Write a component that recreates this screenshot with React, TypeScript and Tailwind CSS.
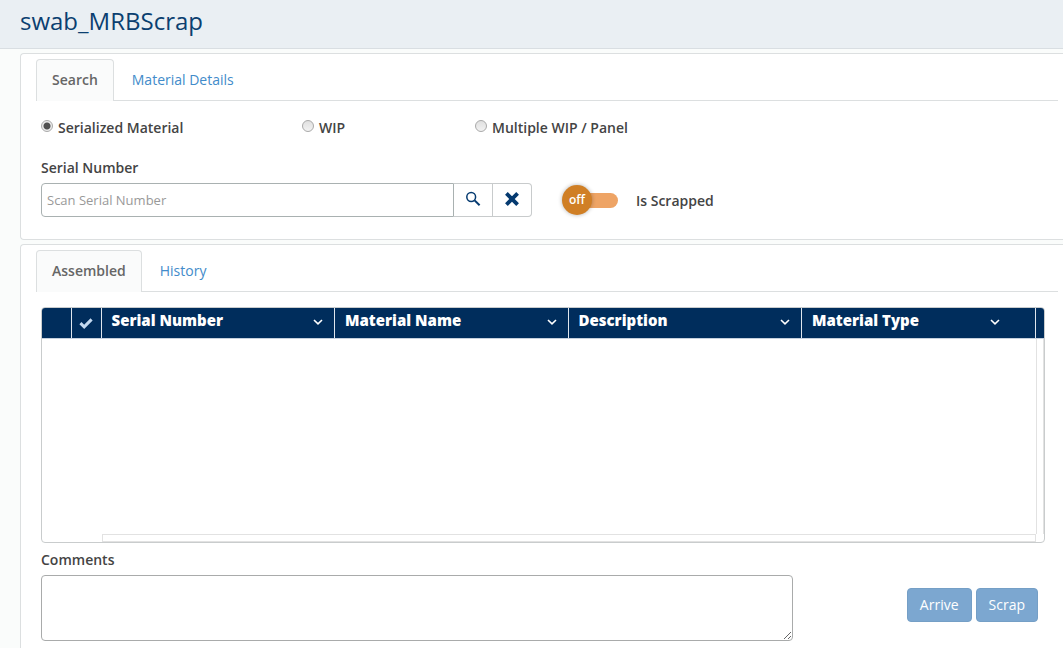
import { useState } from "react";

type TabSet = { active: string; other: string; label: string };

function Tabs({ active, other, label }: TabSet) {
  return (
    <nav aria-label={label} className="ml-[15px] mr-[5px] flex h-[42px] border-b border-[#dcdfe0]">
      <a
        href="#"
        aria-current="page"
        className="-mb-px flex items-center rounded-t border border-b-0 border-[#dcdfe0] bg-[#fafbfb] px-[15px] pb-px font-semibold text-[#666]"
      >
        {active}
      </a>
      <a href="#" className="flex items-center px-[18px] text-[#428bca]">
        {other}
      </a>
    </nav>
  );
}

type RadioProps = { label: string; value: string; current: string; onPick: (value: string) => void };

function Radio({ label, value, current, onPick }: RadioProps) {
  return (
    <label className="flex h-5 items-start gap-[5px] font-semibold whitespace-nowrap">
      <input
        type="radio"
        name="mode"
        checked={current === value}
        onChange={() => onPick(value)}
        className="mt-[2px] h-3 w-3 appearance-none rounded-full border border-[#a9a9a9] bg-linear-to-b from-[#e0e0e0] to-[#f2f2f2] checked:bg-[radial-gradient(circle,#505050_0_3px,#ececec_4px)]"
      />
      {label}
    </label>
  );
}

function SearchIcon() {
  return (
    <svg width="16" height="16" viewBox="0 0 16 16" fill="none" stroke="#053a70" aria-hidden="true">
      <circle cx="6.2" cy="6" r="4.4" strokeWidth="1.5" />
      <path d="M9.6 9.4 14.6 14.2" strokeWidth="2" />
    </svg>
  );
}

function ClearIcon() {
  return (
    <svg width="14" height="14" viewBox="0 0 14 14" stroke="#053a70" strokeWidth="3.8" aria-hidden="true">
      <path d="M1.4 1.4 12.6 12.6M12.6 1.4 1.4 12.6" />
    </svg>
  );
}

function Chevron() {
  return (
    <svg width="10" height="6" viewBox="0 0 10 6" fill="none" stroke="#fff" strokeWidth="1.6" aria-hidden="true">
      <path d="M1 1 5 4.8 9 1" />
    </svg>
  );
}

const columns = ["Serial Number", "Material Name", "Description", "Material Type"];

function MaterialGrid() {
  return (
    <div className="mr-[18px] ml-5 overflow-hidden rounded border border-[#c9cccd] bg-white">
      <table className="w-full table-fixed border-collapse bg-[#002d5c] text-white">
        <thead>
          <tr className="h-[30px]">
            <th className="w-[29px] border-r border-[#dfe6ee]" aria-label="Row" />
            <th className="w-[30px] border-r border-[#dfe6ee]" aria-label="Selected">
              <svg width="14" height="11" viewBox="0 0 14 11" fill="none" stroke="#c3d9ef" strokeWidth="3" className="mx-auto" aria-hidden="true">
                <path d="M1.4 5.2 5.2 8.8 12.6 1.4" />
              </svg>
            </th>
            {columns.map((name) => (
              <th key={name} className="group border-r border-[#dfe6ee] p-0 text-left align-top text-[15px] font-extrabold">
                <div className="flex h-[28px] items-center justify-between pr-[11px] pl-[10px] group-nth-[6]:pr-[35px]">
                  <span className="pb-1">{name}</span>
                  <button type="button" aria-label={"Sort " + name}>
                    <Chevron />
                  </button>
                </div>
              </th>
            ))}
            <th className="w-[9px]" aria-label="Scroll" />
          </tr>
        </thead>
      </table>
      <div className="flex h-[204px] flex-col border-t border-[#c5d0de]">
        <div className="flex flex-1 justify-end">
          <div className="w-2 border-x border-[#e2e2e2]" />
        </div>
        <div className="mr-2 ml-[60px] h-2 border border-[#e2e2e2]" />
      </div>
    </div>
  );
}

export default function App() {
  const [mode, setMode] = useState("serialized");
  const [scrapped, setScrapped] = useState(false);

  return (
    <div className="min-h-screen overflow-hidden bg-[#fafcfb] font-['Open_Sans',sans-serif] text-sm leading-5 text-[#444]">
      <header className="flex h-[49px] items-center border-b border-[#d9dee2] bg-[#eaeff3] px-5 pb-[6px]">
        <h1 className="text-2xl font-normal text-[#0b3f70]">swab_MRBScrap</h1>
      </header>

      <main className="flex flex-col gap-1 pt-1 pl-5">
        <section className="rounded-l border border-r-0 border-[#dcdfe0] bg-white pt-[5px] pb-[22px]">
          <Tabs active="Search" other="Material Details" label="Search views" />
          <div className="mx-5 mt-[17px]">
            <div className="grid max-w-3xl grid-cols-[261px_173px_1fr]">
              <Radio label="Serialized Material" value="serialized" current={mode} onPick={setMode} />
              <Radio label="WIP" value="wip" current={mode} onPick={setMode} />
              <Radio label="Multiple WIP / Panel" value="multiple" current={mode} onPick={setMode} />
            </div>
            <label htmlFor="serial" className="mt-5 block font-semibold">
              Serial Number
            </label>
            <div className="mt-[5px] flex items-center">
              <div className="flex h-[34px] w-[491px]">
                <input
                  id="serial"
                  type="text"
                  placeholder="Scan Serial Number"
                  className="min-w-0 flex-1 rounded-l border border-[#a9b1b1] px-[5px] text-[13px] outline-none placeholder:text-[#999]"
                />
                <button type="button" aria-label="Search" className="flex w-[39px] items-center justify-center border-y border-r border-[#c8cbcc] pb-[2px]">
                  <SearchIcon />
                </button>
                <button type="button" aria-label="Clear" className="flex w-[39px] items-center justify-center rounded-r border-y border-r border-[#c8cbcc] pb-[2px]">
                  <ClearIcon />
                </button>
              </div>
              <button
                type="button"
                role="switch"
                aria-checked={scrapped}
                aria-labelledby="scrapped-label"
                onClick={() => setScrapped(!scrapped)}
                className="ml-[30px] flex w-14 items-center"
              >
                <span className="z-10 flex h-[30px] w-[30px] items-center justify-center rounded-full bg-[#d07f25] text-xs font-semibold text-white shadow-[0_0_4px_rgba(0,0,0,0.3)]">
                  {scrapped ? "on" : "off"}
                </span>
                <span className="-ml-1 h-[15px] flex-1 rounded-r-lg bg-[#eea465]" />
              </button>
              <span id="scrapped-label" className="ml-[18px] pt-[2px] font-semibold">
                Is Scrapped
              </span>
            </div>
          </div>
        </section>

        <section className="rounded-l border border-r-0 border-[#dcdfe0] bg-white pt-[5px] pb-5">
          <Tabs active="Assembled" other="History" label="Material views" />
          <div className="mt-[15px]">
            <MaterialGrid />
          </div>
          <div className="mt-[7px] mr-[25px] ml-5 flex items-end justify-between">
            <div className="w-[752px]">
              <label htmlFor="comments" className="block font-semibold">
                Comments
              </label>
              <textarea id="comments" className="mt-[5px] block h-[66px] w-full rounded border border-[#a9abab] bg-white p-[5px] outline-none" />
            </div>
            <div className="mb-[19px] flex gap-1">
              <button type="button" className="h-[34px] rounded border border-[#759fc6] bg-[#7ca7d0] px-3 font-medium text-white">
                Arrive
              </button>
              <button type="button" className="h-[34px] rounded border border-[#759fc6] bg-[#7ca7d0] px-3 font-medium text-white">
                Scrap
              </button>
            </div>
          </div>
        </section>
      </main>
    </div>
  );
}
